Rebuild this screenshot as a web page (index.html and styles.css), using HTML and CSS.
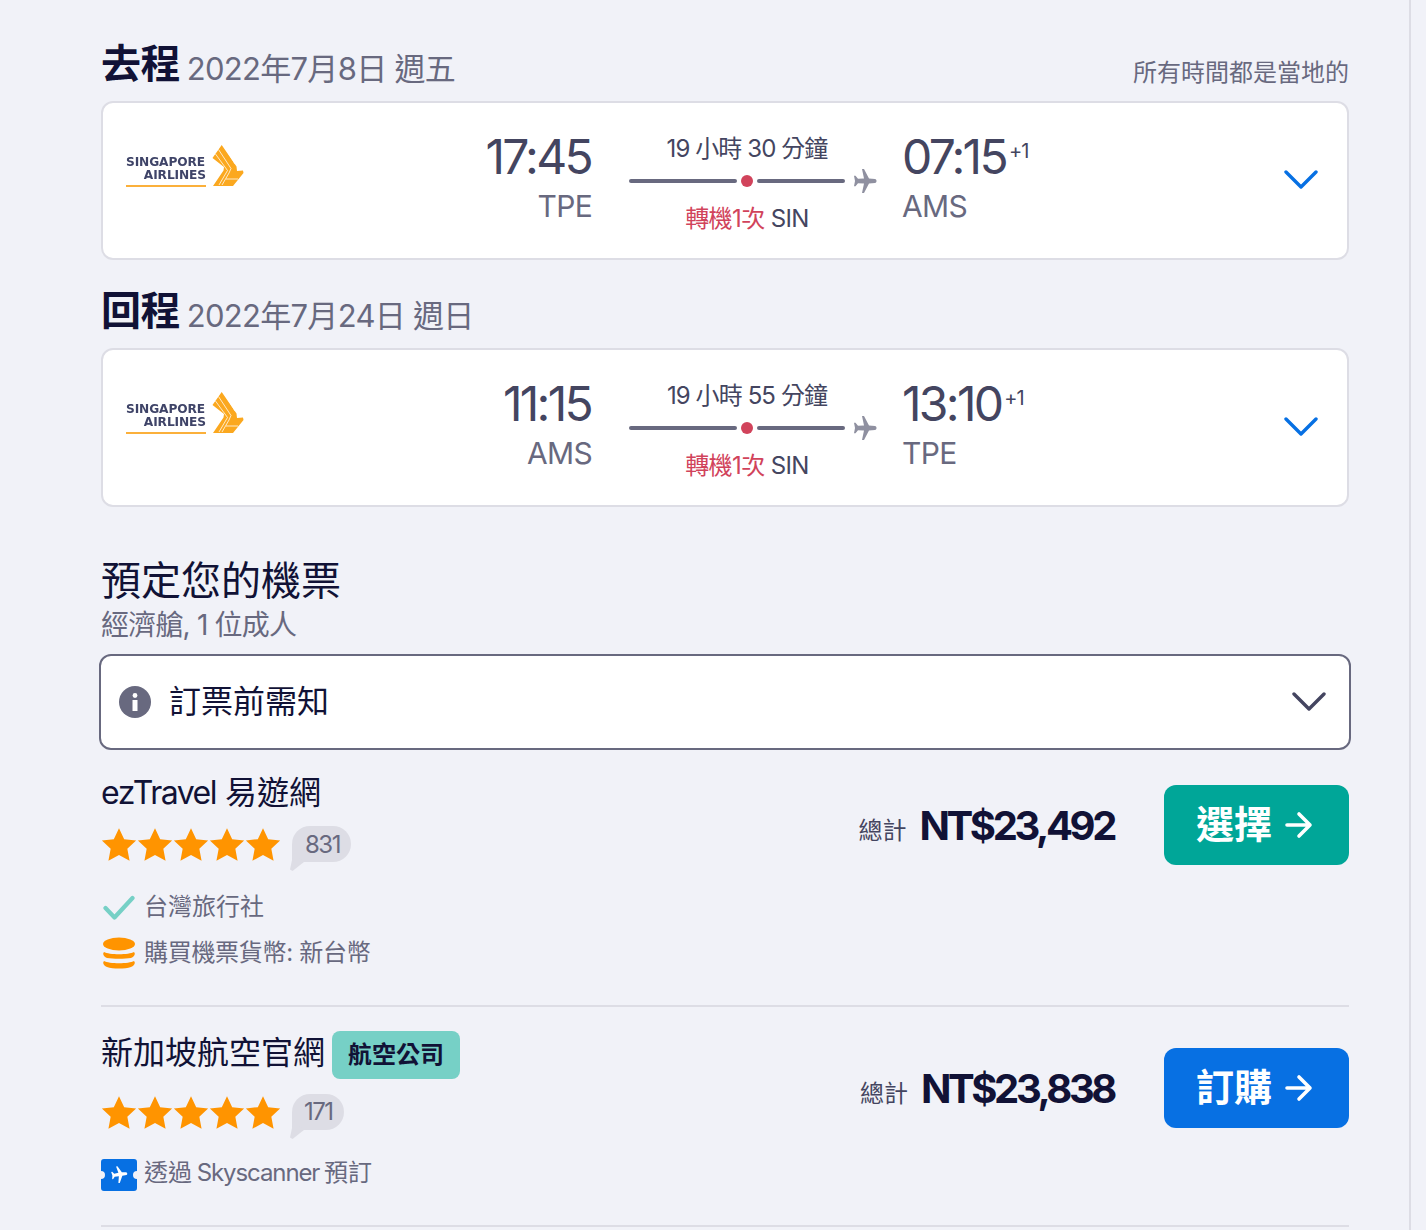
FILE: index.html
```html
<!DOCTYPE html>
<html lang="zh-Hant">
<head>
<meta charset="utf-8">
<title>預定您的機票</title>
<link rel="stylesheet" href="styles.css">
</head>
<body>
<svg class="defs" width="0" height="0" aria-hidden="true">
  <defs>
    <symbol id="wing" viewBox="0 0 33 42">
      <path d="M10.700 0L25.500 21.500 26 26l6-.5.500 2.500L22 41H2l10.500-15.500L13 22 1.500 13z" fill="#fba81f"/>
      <path d="M7.500 4.500L20 23.500 18 28 11 40M4.500 9L16.500 25.500 8 40M14 2.500L24 19" fill="none" stroke="#fff" stroke-width="1" opacity=".75"/>
      <path d="M15 34h12" stroke="#fff" stroke-width="1" opacity=".75"/>
    </symbol>
    <symbol id="star" viewBox="0 0 32 32">
      <path d="M16 1l4.600 9.800 10.600 1.300-7.800 7.300 2 10.600L16 24.800 6.600 30l2-10.600L.8 12.100l10.600-1.300z" fill="#ff9400"/>
    </symbol>
    <symbol id="plane" viewBox="0 0 26 26">
      <path d="M11 1h2l5 9.500 6 .5c2 .2 2 3.800 0 4l-6 .5L13 25h-2l2-9.500-6-.3-2.500 3H3l1-5.200-1-5.200h1.500l2.500 3 6-.3z" fill="#8f90a0"/>
    </symbol>
    <symbol id="chev" viewBox="0 0 34 22">
      <path d="M2 3l15 15L32 3" fill="none" stroke="currentColor" stroke-width="3.400" stroke-linecap="round" stroke-linejoin="round"/>
    </symbol>
    <symbol id="arrow" viewBox="0 0 30 28">
      <path d="M3 14h23M15 3l11 11-11 11" fill="none" stroke="#fff" stroke-width="3.600" stroke-linecap="round" stroke-linejoin="round"/>
    </symbol>
  </defs>
</svg>

<main class="page">
  <section class="leg">
    <div class="leg-head">
      <h2 class="leg-title"><strong>去程</strong> <span>2022年7月8日 週五</span></h2>
      <span class="local-note">所有時間都是當地的</span>
    </div>
    <article class="flight-card">
      <div class="airline-logo">
        <div class="logo-words"><span>SINGAPORE</span><span class="logo-second">AIRLINES</span><i class="logo-rule"></i></div>
        <svg class="logo-wing"><use href="#wing"/></svg>
      </div>
      <div class="point point-depart"><div class="time">17:45</div><div class="code">TPE</div></div>
      <div class="route">
        <div class="duration">19 小時 30 分鐘</div>
        <div class="route-line"><i class="seg"></i><i class="stop-dot"></i><i class="seg"></i><svg class="plane"><use href="#plane"/></svg></div>
        <div class="stops"><span class="stop-red">轉機1次</span> SIN</div>
      </div>
      <div class="point point-arrive"><div class="time">07:15<sup>+1</sup></div><div class="code">AMS</div></div>
      <svg class="card-chev"><use href="#chev"/></svg>
    </article>
  </section>

  <section class="leg">
    <div class="leg-head">
      <h2 class="leg-title"><strong>回程</strong> <span>2022年7月24日 週日</span></h2>
    </div>
    <article class="flight-card">
      <div class="airline-logo">
        <div class="logo-words"><span>SINGAPORE</span><span class="logo-second">AIRLINES</span><i class="logo-rule"></i></div>
        <svg class="logo-wing"><use href="#wing"/></svg>
      </div>
      <div class="point point-depart"><div class="time">11:15</div><div class="code">AMS</div></div>
      <div class="route">
        <div class="duration">19 小時 55 分鐘</div>
        <div class="route-line"><i class="seg"></i><i class="stop-dot"></i><i class="seg"></i><svg class="plane"><use href="#plane"/></svg></div>
        <div class="stops"><span class="stop-red">轉機1次</span> SIN</div>
      </div>
      <div class="point point-arrive"><div class="time">13:10<sup>+1</sup></div><div class="code">TPE</div></div>
      <svg class="card-chev"><use href="#chev"/></svg>
    </article>
  </section>

  <section class="booking">
    <h1 class="booking-title">預定您的機票</h1>
    <p class="booking-sub">經濟艙, 1 位成人</p>
    <div class="notice">
      <svg class="notice-icon" viewBox="0 0 32 32"><circle cx="16" cy="16" r="16" fill="#68697f"/><circle cx="16" cy="9.500" r="2.400" fill="#fff"/><path d="M13.500 14h5v11h-5z" fill="#fff"/></svg>
      <span class="notice-text">訂票前需知</span>
      <svg class="notice-chev"><use href="#chev"/></svg>
    </div>

    <article class="offer">
      <div class="offer-info">
        <div class="offer-name"><span class="latin">ezTravel</span> 易遊網</div>
        <div class="rating">
          <div class="stars"><svg><use href="#star"/></svg><svg><use href="#star"/></svg><svg><use href="#star"/></svg><svg><use href="#star"/></svg><svg><use href="#star"/></svg></div>
          <span class="bubble">831</span>
        </div>
        <div class="perk perk-first">
          <svg class="perk-icon check" viewBox="0 0 32 26"><path d="M2.500 13l9 9.500L29.500 3" fill="none" stroke="#76d0c6" stroke-width="4.200" stroke-linecap="round" stroke-linejoin="round"/></svg>
          <span>台灣旅行社</span>
        </div>
        <div class="perk perk-coins">
          <svg class="perk-icon coins" viewBox="0 0 32 32"><ellipse cx="16" cy="7" rx="16" ry="6.500" fill="#ff9400"/><path d="M1 15c5 3 25 3 30 0 2 2 0 5-3 6-6 1-18 1-24 0-3-1-5-4-3-6z" fill="#ff9400"/><path d="M1 24c5 3 25 3 30 0 2 2 0 5-3 6-6 2-18 2-24 0-3-1-5-4-3-6z" fill="#ff9400"/></svg>
          <span class="perk-tight">購買機票貨幣: 新台幣</span>
        </div>
      </div>
      <div class="offer-buy">
        <span class="total-label">總計</span>
        <span class="price">NT$23,492</span>
        <a class="buy-btn buy-green"><span class="buy-label">選擇</span><svg class="buy-arrow"><use href="#arrow"/></svg></a>
      </div>
    </article>

    <article class="offer offer-second">
      <div class="offer-info">
        <div class="offer-name-row"><span class="offer-name">新加坡航空官網</span><span class="badge">航空公司</span></div>
        <div class="rating">
          <div class="stars"><svg><use href="#star"/></svg><svg><use href="#star"/></svg><svg><use href="#star"/></svg><svg><use href="#star"/></svg><svg><use href="#star"/></svg></div>
          <span class="bubble bubble-small">171</span>
        </div>
        <div class="perk perk-sky">
          <svg class="perk-icon ticket" viewBox="0 0 36 32"><path d="M3 0h30a3 3 0 0 1 3 3v9a4 4 0 0 0 0 8v9a3 3 0 0 1-3 3H3a3 3 0 0 1-3-3v-9a4 4 0 0 0 0-8V3a3 3 0 0 1 3-3z" fill="#0770e3"/><path transform="translate(8.500 6.500) rotate(-8 9 9) scale(.7)" d="M11 1h2l5 9.500 6 .5c2 .2 2 3.800 0 4l-6 .5L13 25h-2l2-9.500-6-.3-2.500 3H3l1-5.200-1-5.200h1.500l2.500 3 6-.3z" fill="#fff"/></svg>
          <span class="sky-text">透過 <span class="latin-sky">Skyscanner</span> 預訂</span>
        </div>
      </div>
      <div class="offer-buy">
        <span class="total-label">總計</span>
        <span class="price">NT$23,838</span>
        <a class="buy-btn buy-blue"><span class="buy-label">訂購</span><svg class="buy-arrow"><use href="#arrow"/></svg></a>
      </div>
    </article>
  </section>
</main>
</body>
</html>
```

FILE: styles.css
```css
* { box-sizing: border-box; }
html, body { margin: 0; padding: 0; }
body {
  height: 1230px;
  overflow: hidden;
  background: #f1f2f8;
  color: #111236;
  font-family: Inter, "Noto Sans CJK TC", sans-serif;
}
.defs { position: absolute; }
.page {
  width: 1411px;
  height: 1230px;
  padding: 40px 60px 0 101px;
  border-right: 2px solid #dddde5;
}
.leg { margin-bottom: 27px; }
.leg-head {
  display: flex;
  justify-content: space-between;
  align-items: flex-end;
  height: 61px;
  padding-bottom: 8px;
}
.leg-title { margin: 0; font-weight: 400; line-height: 46px; white-space: nowrap; }
.leg-title strong { font-size: 40px; font-weight: 700; color: #111236; letter-spacing: -.5px; }
.leg-title span { font-size: 31px; color: #68697f; letter-spacing: -.7px; position: relative; top: 2px; }
.local-note { font-size: 24px; line-height: 32px; color: #68697f; margin-bottom: 4px; }

.flight-card {
  display: grid;
  grid-template-columns: 120px 369px 311px 1fr 34px;
  column-gap: 0;
  align-items: start;
  height: 159px;
  background: #fff;
  border: 2px solid #dddde5;
  border-radius: 12px;
}
.airline-logo {
  display: flex;
  align-items: flex-end;
  margin: 42px 0 0 23px;
  width: 120px;
  filter: blur(.5px);
}
.logo-words {
  display: flex;
  flex-direction: column;
  width: 80px;
  font-family: "DejaVu Sans", sans-serif;
  font-weight: 700;
  font-size: 12.200px;
  line-height: 13px;
  color: #3f4468;
}
.logo-words span { display: block; white-space: nowrap; letter-spacing: -.1px; }
.logo-second { text-align: right; }
.logo-rule { display: block; height: 2px; margin-top: 3px; background: #fbb03b; }
.logo-wing { width: 33px; height: 42px; margin-left: 5px; }

.point { padding-top: 23px; }
.point-depart { text-align: right; }
.point-depart .time { padding-right: 1px; }
.point-arrive { margin-left: -1px; }
.time { font-size: 48px; line-height: 62px; color: #444560; letter-spacing: -2.700px; white-space: nowrap; }
.time sup { font-size: 20px; line-height: 0; vertical-align: 16px; letter-spacing: -1px; margin-left: 3px; }
.code { font-size: 30px; line-height: 40px; color: #68697f; letter-spacing: -.7px; margin-top: -2px; }
.route { margin-left: 37px; width: 249px; padding-top: 30px; }
.duration { width: 236px; text-align: center; font-size: 24px; line-height: 32px; color: #444560; letter-spacing: -.9px; white-space: nowrap; }
.route-line { display: flex; align-items: center; height: 28px; margin-top: 2px; }
.seg { display: block; width: 108px; height: 4px; border-radius: 2px; background: #68697f; }
.stop-dot { display: block; width: 12px; height: 12px; margin: 0 4px; border-radius: 50%; background: #d1435b; flex: none; }
.seg + .stop-dot + .seg { width: 88px; }
.plane { width: 26px; height: 26px; margin-left: 6px; flex: none; }
.stops { width: 236px; text-align: center; font-size: 24px; line-height: 32px; margin-top: 8px; color: #444560; letter-spacing: -.6px; white-space: nowrap; }
.stop-red { color: #d1435b; }
.card-chev { width: 34px; height: 22px; margin: 66px 0 0 -29px; color: #0770e3; }

.booking { padding-top: 22px; }
.booking-title { margin: 0; font-size: 40px; font-weight: 400; line-height: 50px; color: #111236; }
.booking-sub { margin: 2px 0 0; font-size: 28px; line-height: 34px; color: #68697f; letter-spacing: -.8px; }
.notice {
  display: flex;
  align-items: center;
  width: 1252px;
  height: 96px;
  margin: 12px 0 0 -2px;
  padding: 0 23px 0 18px;
  background: #fff;
  border: 2px solid #68697f;
  border-radius: 12px;
}
.notice-icon { width: 32px; height: 32px; flex: none; }
.notice-text { margin-left: 18px; padding-bottom: 6px; font-size: 32px; color: #111236; }
.notice-chev { width: 34px; height: 22px; margin-left: auto; color: #444560; }

.offer {
  display: flex;
  justify-content: space-between;
  align-items: flex-start;
  height: 257px;
  padding-top: 23px;
  border-bottom: 2px solid #dddde5;
}
.offer-second { height: 220px; padding-top: 24px; }
.offer-info { display: flex; flex-direction: column; }
.offer-name { font-size: 32px; line-height: 40px; color: #111236; white-space: nowrap; }
.latin { letter-spacing: -1.500px; }
.offer-name-row { display: flex; align-items: center; height: 48px; }
.offer-name-row .offer-name { padding-bottom: 4px; }
.badge {
  display: block;
  margin-left: 7px;
  padding: 0 16px;
  height: 48px;
  line-height: 47px;
  border-radius: 8px;
  background: #76d0c6;
  font-size: 24px;
  font-weight: 700;
  color: #111236;
  white-space: nowrap;
}
.rating { display: flex; align-items: flex-start; margin-top: 13px; }
.offer-second .rating { margin-top: 15px; }
.stars { display: flex; width: 180px; margin-top: 1px; }
.stars svg { width: 36px; height: 36px; flex: none; }
.bubble {
  position: relative;
  display: block;
  margin: 0 0 0 11px;
  padding: 1px 11px 0 13px;
  height: 36px;
  line-height: 36px;
  border-radius: 18px 18px 18px 0;
  background: #dddde5;
  font-size: 24px;
  color: #68697f;
  letter-spacing: -1.500px;
}
.bubble::after {
  content: "";
  position: absolute;
  left: -2px;
  bottom: -9px;
  width: 14px;
  height: 18px;
  background: #dddde5;
  clip-path: polygon(25% 0, 100% 50%, 18% 100%, 0 92%);
}
.bubble-small { padding: 0 11px 0 12px; }
.perk { display: flex; align-items: center; font-size: 24px; line-height: 32px; color: #68697f; margin-top: 14px; white-space: nowrap; }
.perk-first { margin-top: 28px; }
.perk-coins { margin-top: 14px; }
.perk-sky { margin-top: 24px; }
.perk-icon { width: 36px; height: 28px; flex: none; margin-right: 7px; }
.check { width: 32px; height: 26px; margin: 2px 9px 0 2px; }
.perk-tight { letter-spacing: -.3px; }
.sky-text { word-spacing: -2px; }
.latin-sky { letter-spacing: -1.100px; }
.coins { width: 32px; height: 32px; margin: 0 9px 0 2px; }
.ticket { height: 32px; margin-top: 4px; }

.offer-buy { display: flex; align-items: center; margin-top: 12px; }
.offer-second .offer-buy { margin-top: 17px; }
.total-label { font-size: 24px; color: #444560; padding-top: 6px; }
.price { margin-left: 13px; font-size: 40px; font-weight: 700; color: #111236; letter-spacing: -3.400px; white-space: nowrap; }
.buy-btn {
  display: flex;
  align-items: center;
  justify-content: center;
  width: 185px;
  height: 80px;
  margin-left: 50px;
  padding-right: 3px;
  border-radius: 12px;
  color: #fff;
  font-size: 38px;
  font-weight: 700;
}
.buy-label { padding-bottom: 8px; }
.buy-green { background: #00a698; }
.buy-blue { background: #0770e3; }
.buy-arrow { width: 30px; height: 28px; margin-left: 12px; }
```
